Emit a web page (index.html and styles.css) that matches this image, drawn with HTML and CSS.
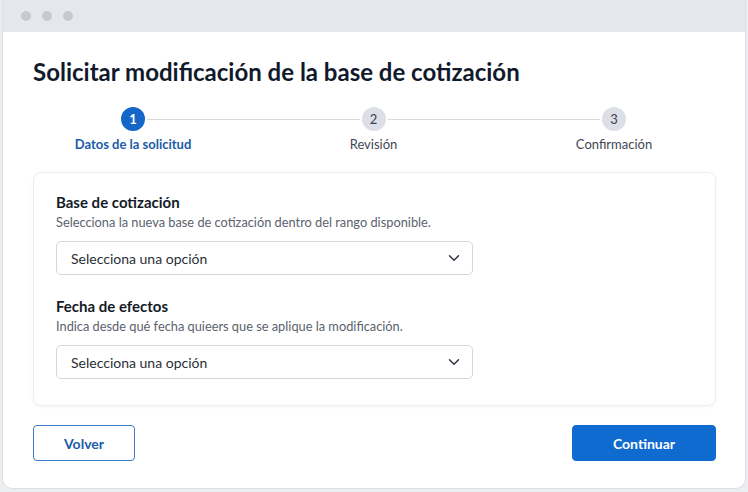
FILE: index.html
```html
<!DOCTYPE html>
<html lang="es">
<head>
<meta charset="utf-8">
<title>Solicitar modificación</title>
<link rel="stylesheet" href="styles.css">
</head>
<body>
<div class="window">
  <div class="titlebar">
    <span class="dot"></span><span class="dot"></span><span class="dot"></span>
  </div>
  <main class="content">
    <h1 class="title">Solicitar modificación de la base de cotización</h1>
    <div class="stepper">
      <div class="step active"><span class="circle">1</span><span class="step-label">Datos de la solicitud</span></div>
      <div class="line"></div>
      <div class="step"><span class="circle">2</span><span class="step-label">Revisión</span></div>
      <div class="line"></div>
      <div class="step"><span class="circle">3</span><span class="step-label">Confirmación</span></div>
    </div>
    <section class="card">
      <div class="field">
        <h2 class="field-title">Base de cotización</h2>
        <p class="field-desc">Selecciona la nueva base de cotización dentro del rango disponible.</p>
        <div class="select"><span>Selecciona una opción</span>
          <svg class="chev" width="12" height="8" viewBox="0 0 12 8"><path d="M1.5 1.8 L6 6.2 L10.5 1.8" fill="none" stroke="#2f3440" stroke-width="1.5" stroke-linecap="round" stroke-linejoin="round"/></svg>
        </div>
      </div>
      <div class="field second">
        <h2 class="field-title">Fecha de efectos</h2>
        <p class="field-desc">Indica desde qué fecha quieers que se aplique la modificación.</p>
        <div class="select"><span>Selecciona una opción</span>
          <svg class="chev" width="12" height="8" viewBox="0 0 12 8"><path d="M1.5 1.8 L6 6.2 L10.5 1.8" fill="none" stroke="#2f3440" stroke-width="1.5" stroke-linecap="round" stroke-linejoin="round"/></svg>
        </div>
      </div>
    </section>
    <div class="actions">
      <button class="btn btn-secondary">Volver</button>
      <button class="btn btn-primary">Continuar</button>
    </div>
  </main>
</div>
</body>
</html>
```
FILE: styles.css
```css
* { box-sizing: border-box; }
html, body { margin: 0; padding: 0; }
body {
  width: 748px;
  height: 492px;
  background: #eceef1;
  font-family: "Lato", "Liberation Sans", sans-serif;
  overflow: hidden;
}
.window {
  margin-left: 2px;
  width: 744px;
  height: 489px;
  background: #ffffff;
  border: 1px solid #dcdfe4;
  border-top: none;
  border-radius: 0 0 10px 10px;
  overflow: hidden;
}
.titlebar {
  height: 32px;
  background: #e5e7ec;
  display: flex;
  align-items: center;
  gap: 11px;
  padding-left: 18px;
}
.dot {
  width: 10px;
  height: 10px;
  border-radius: 50%;
  background: #c7c9d0;
}
.content {
  padding: 25px 29px 0 30px;
}
.title {
  margin: 0;
  font-size: 24px;
  line-height: 29px;
  font-weight: 700;
  color: #111a2c;
}
.stepper {
  display: flex;
  align-items: flex-start;
  margin-top: 21px;
  padding: 0 90px 0 88px;
}
.step {
  width: 24px;
  display: flex;
  flex-direction: column;
  align-items: center;
}
.circle {
  width: 24px;
  height: 24px;
  border-radius: 50%;
  background: #dcdfe5;
  color: #3b4250;
  font-size: 13px;
  display: flex;
  align-items: center;
  justify-content: center;
}
.step.active .circle {
  background: #1467c8;
  color: #ffffff;
  font-weight: 700;
}
.step-label {
  margin-top: 5px;
  white-space: nowrap;
  font-size: 13px;
  line-height: 16px;
  color: #3f4652;
}
.step.active .step-label {
  color: #1b5ba8;
  font-weight: 700;
}
.line {
  flex: 1;
  height: 1px;
  background: #d6d9df;
  margin: 12px 2px 0;
}
.card {
  margin-top: 20px;
  border: 1px solid #eceef1;
  border-radius: 8px;
  box-shadow: 0 1px 4px rgba(20, 30, 50, 0.04);
  padding: 19px 23px 26px 22px;
}
.field.second { margin-top: 21px; }
.field-title {
  margin: 0;
  font-size: 15px;
  line-height: 20px;
  font-weight: 700;
  color: #141b26;
}
.field-desc {
  margin: 2px 0 0;
  font-size: 12.8px;
  line-height: 16px;
  color: #5b626d;
}
.select {
  margin-top: 11px;
  width: 417px;
  height: 34px;
  border: 1px solid #d3d7dd;
  border-radius: 5px;
  display: flex;
  align-items: center;
  justify-content: space-between;
  padding: 0 12px 0 14px;
  font-size: 14px;
  color: #2a2f38;
}
.chev { display: block; }
.actions {
  margin-top: 19px;
  display: flex;
  justify-content: space-between;
}
.btn {
  height: 36px;
  border-radius: 4px;
  font-family: inherit;
  font-size: 14px;
  font-weight: 700;
  cursor: pointer;
}
.btn-secondary {
  width: 102px;
  background: #ffffff;
  border: 1px solid #3b7ac4;
  color: #1b5ba8;
}
.btn-primary {
  width: 144px;
  background: #0f6bd0;
  border: 1px solid #0f6bd0;
  color: #ffffff;
}
```
